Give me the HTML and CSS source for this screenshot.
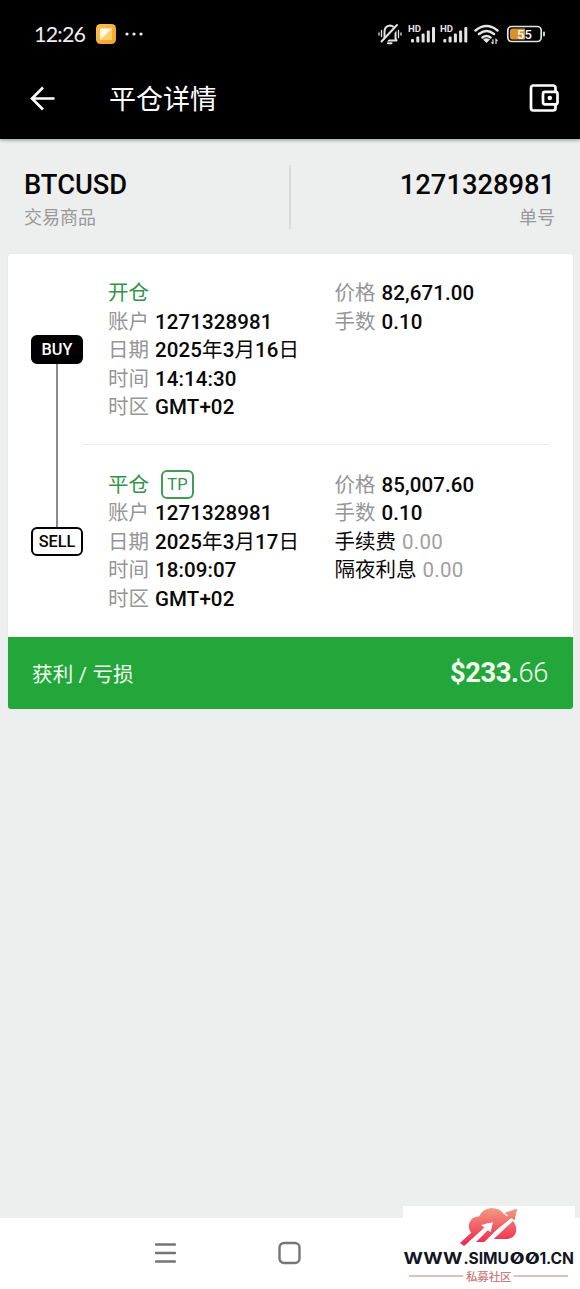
FILE: index.html
```html
<!DOCTYPE html>
<html lang="zh-CN">
<head>
<meta charset="utf-8">
<title>平仓详情</title>
<link rel="stylesheet" href="styles.css">
</head>
<body>
<div class="screen">
  <header class="top">
    <div class="status">
      <span class="clock">12:26</span>
      <svg class="note" width="20" height="20" viewBox="0 0 20 20">
        <defs><linearGradient id="amber" x1="0" y1="0" x2="1" y2="1"><stop offset="0" stop-color="#ffc04e"/><stop offset="1" stop-color="#f0a22a"/></linearGradient></defs>
        <rect width="20" height="20" rx="4.500" fill="url(#amber)"/>
        <rect x="4" y="4.500" width="12" height="11.500" rx="1" fill="#ffcf6c"/>
        <path d="M4 4.500H16L4 16Z" fill="#fff8e5"/>
      </svg>
      <svg class="dots" width="18" height="4" viewBox="0 0 18 4" fill="#eee"><circle cx="2" cy="2" r="1.600"/><circle cx="9" cy="2" r="1.600"/><circle cx="16" cy="2" r="1.600"/></svg>
      <svg class="indicators" width="170" height="26" viewBox="376 21 170 26" fill="none" stroke="#e4e4e4" stroke-width="2" stroke-linecap="round">
        <path d="M383.500 40.500H396.500L395.500 38.500V32Q395.500 26 390 25.500Q384.500 26 384.500 32V38.500Z" stroke-linejoin="round"/>
        <path d="M388 43.300H391.500"/>
        <path d="M397.500 26L384 41.500" stroke="#000" stroke-width="4.500"/>
        <path d="M397 25L381.500 41.500" stroke-width="2"/>
        <path d="M379 33V35M381.500 30.500V36.500M398.500 30.500V37.500M401 33V35" stroke-width="1.300"/>
        <g fill="#e4e4e4" stroke="none">
          <g id="bars"><rect x="411" y="39" width="3" height="3.500" rx="1"/><rect x="416.300" y="36.500" width="3" height="6" rx="1"/><rect x="421.600" y="33.500" width="3" height="9" rx="1"/><rect x="426.800" y="30.500" width="3" height="12" rx="1"/><rect x="432" y="27" width="3" height="15.500" rx="1"/></g>
          <use href="#bars" x="32.300"/>
          <text class="hd" x="408" y="32" textLength="13" lengthAdjust="spacingAndGlyphs">HD</text>
          <text class="hd" x="440" y="32" textLength="13" lengthAdjust="spacingAndGlyphs">HD</text>
          <path d="M483 39.500Q486.500 37 490 39.500L486.500 43Z"/>
        </g>
        <path d="M475.500 30.500Q486.500 21.500 497.500 30.500M479 34Q486.500 28 494 34M482.500 37.500Q486.500 34.500 490.500 37.500" stroke-width="2.500"/>
        <path d="M493 39.500V43.500M491.800 42.500L493 43.700M496 43.500V39.500L497.200 40.700" stroke-width="1.200"/>
        <path d="M512 28.500H525V39.500H512Q510 39.500 510 37V31Q510 28.500 512 28.500Z" fill="#d99128" stroke="none"/>
        <rect x="507.800" y="26.500" width="33.400" height="15" rx="4" stroke-width="1.700"/>
        <path d="M544 32.500V35.500" stroke-width="1.800"/>
        <text class="charge" x="524.500" y="38.800" text-anchor="middle">55</text>
      </svg>
    </div>
    <div class="appbar">
      <svg width="26" height="26" viewBox="0 0 26 26" fill="none" stroke="#fff" stroke-width="2.600"><path d="M25.500 13.500H3M14 2.500L3 13.500L14 24.500"/></svg>
      <h1 class="title">平仓详情</h1>
      <svg class="wallet" width="32" height="30" viewBox="0 0 32 30" fill="none" stroke="#fff" stroke-width="2.700" stroke-linejoin="round"><path d="M27.500 8V5Q27.500 2.500 25 2.500H5.500Q3 2.500 3 5V25Q3 27.500 5.500 27.500H25Q27.500 27.500 27.500 25V22"/><rect x="15" y="8.800" width="14.500" height="12.500" rx="2"/><circle cx="21.800" cy="15" r="2.300" fill="#fff" stroke="none"/></svg>
    </div>
  </header>

  <section class="summary">
    <div class="cell"><div class="value">BTCUSD</div><div class="caption">交易商品</div></div>
    <div class="cell right"><div class="value">1271328981</div><div class="caption">单号</div></div>
  </section>

  <main class="card">
    <div class="trade">
      <div class="rail"><span class="side buy">BUY</span><span class="line"></span><span class="side sell">SELL</span></div>
      <div class="legs">
        <section class="leg">
          <div class="col">
            <div class="row green">开仓</div>
            <div class="row"><span>账户</span> <b>1271328981</b></div>
            <div class="row"><span>日期</span> <b>2025<i>年</i>3<i>月</i>16<i>日</i></b></div>
            <div class="row"><span>时间</span> <b>14:14:30</b></div>
            <div class="row"><span>时区</span> <b>GMT+02</b></div>
          </div>
          <div class="col">
            <div class="row"><span>价格</span> <b>82,671.00</b></div>
            <div class="row"><span>手数</span> <b>0.10</b></div>
          </div>
        </section>
        <section class="leg">
          <div class="col">
            <div class="row green">平仓<span class="tag">TP</span></div>
            <div class="row"><span>账户</span> <b>1271328981</b></div>
            <div class="row"><span>日期</span> <b>2025<i>年</i>3<i>月</i>17<i>日</i></b></div>
            <div class="row"><span>时间</span> <b>18:09:07</b></div>
            <div class="row"><span>时区</span> <b>GMT+02</b></div>
          </div>
          <div class="col">
            <div class="row"><span>价格</span> <b>85,007.60</b></div>
            <div class="row"><span>手数</span> <b>0.10</b></div>
            <div class="row"><span class="dark">手续费</span> <b class="muted">0.00</b></div>
            <div class="row"><span class="dark">隔夜利息</span> <b class="muted">0.00</b></div>
          </div>
        </section>
      </div>
    </div>
    <div class="profit"><span class="profit-label">获利 / 亏损</span><span class="amount">$233.<span class="cents">66</span></span></div>
  </main>

  <nav class="nav">
    <svg width="22" height="22" viewBox="0 0 22 22" stroke="#757575" stroke-width="2.400" stroke-linecap="round"><path d="M2 2.500H21M2 11H21M2 19.500H21"/></svg>
    <svg width="24" height="24" viewBox="0 0 24 24" fill="none" stroke="#757575" stroke-width="2.400"><rect x="2.500" y="2" width="20" height="20" rx="4.500"/></svg>
  </nav>

  <svg class="watermark" width="172" height="83" viewBox="403 1206 172 83">
    <defs><linearGradient id="rose" gradientUnits="userSpaceOnUse" x1="0" y1="1208" x2="0" y2="1242"><stop offset="0" stop-color="#f49a82"/><stop offset="1" stop-color="#f0304f"/></linearGradient></defs>
    <rect x="403" y="1206" width="172" height="83" fill="#fff"/>
    <g fill="url(#rose)">
      <path d="M472 1234Q467.500 1229 469.300 1223Q472 1216 479 1216.500Q482 1209 491 1208Q500 1208 504 1214L514 1222Q518 1229 515 1234.500Q512 1239 506 1239H490L485 1242H475Z"/>
    </g>
    <path d="M465 1246.500L486 1228.500L482 1224.500L492.700 1222.500L490.500 1232L488 1230L475.500 1242.500V1247Z" fill="#fff"/>
    <path d="M483.500 1243L511 1215L515 1219L488.500 1241V1243Z" fill="#fff"/>
    <path d="M460 1243L472.500 1231.500L484 1222L486 1228L464 1246Z" fill="url(#rose)"/>
    <path d="M481 1225L492.700 1222.500L490.500 1232L487.500 1229.500L474 1242H468.500L484.500 1227.500Z" fill="#fff"/>
    <path d="M488 1236.500L508 1215.500L504.500 1213L517.300 1208.500L514.500 1220.500L511.500 1218Z" fill="url(#rose)"/>
    <path d="M484.500 1242L509.500 1219.500L513.500 1220.500L490.500 1242Z" fill="#fff"/>
    <text class="site" y="1264.300"><tspan x="403.500" textLength="59" lengthAdjust="spacingAndGlyphs">WWW</tspan><tspan x="463.500">.</tspan><tspan x="468.500" textLength="40.500" lengthAdjust="spacingAndGlyphs">SIMU</tspan><tspan x="509.500" textLength="30.500" lengthAdjust="spacingAndGlyphs">00</tspan><tspan x="539.500">1</tspan><tspan x="546">.</tspan><tspan x="550.500" textLength="23.500" lengthAdjust="spacingAndGlyphs">CN</tspan></text>
    <path d="M409 1276H463M513.500 1276H568" stroke="#c97c80" stroke-width="1.200"/>
    <text class="community" x="466" y="1280.500" textLength="45.500">私募社区</text>
  </svg>
</div>
</body>
</html>
```
FILE: styles.css
```css
* { box-sizing: border-box; }
body { margin: 0; font-family: Roboto, "Noto Sans CJK SC", sans-serif; color: #080808; }
.screen { position: relative; display: flex; flex-direction: column; width: 580px; height: 1289px; background: #edefee; overflow: hidden; }
.top { height: 139px; background: #000; color: #fff; box-shadow: 0 1px 4px rgba(0, 0, 0, .4); }
.status { display: flex; align-items: center; height: 68px; padding: 0 34px; }
.clock { width: 62px; font: 400 21.500px/30px Lato, sans-serif; letter-spacing: -.8px; color: #eee; }
.dots { margin-left: 9px; }
.indicators { margin-left: 233px; flex: none; }
.hd { font: 700 9px Roboto, sans-serif; }
.charge { font: 500 13px Roboto, sans-serif; fill: #fff; stroke: none; }
.appbar { display: flex; align-items: center; height: 60px; padding: 0 20px 0 29px; }
.title { flex: 1; margin: 3px 0 0 54px; font-size: 27px; line-height: 40px; font-weight: 400; }
.wallet { flex: none; }
.summary { display: flex; height: 114.500px; padding: 26px 25px 0 24px; }
.cell { flex: 1; height: 64px; padding-top: 1px; border-right: 2px solid #d9dbda; }
.cell.right { border: 0; text-align: right; }
.value { font-size: 27.300px; line-height: 38px; font-weight: 500; }
.caption { font-size: 18px; line-height: 27px; color: #999; }
.card { margin: 0 7.500px; border-radius: 3px; overflow: hidden; background: #fff; box-shadow: 0 0 2px rgba(0, 0, 0, .06); }
.trade { display: flex; height: 383px; }
.rail { display: flex; flex-direction: column; align-items: center; width: 52px; height: 221px; margin: 81.500px 0 0 23.500px; }
.side { display: flex; align-items: center; justify-content: center; width: 52px; height: 29px; flex: none; border: 2px solid #000; border-radius: 6px; font-size: 16.300px; font-weight: 500; }
.buy { background: #000; color: #fff; }
.line { flex: 1; width: 1.500px; background: #8b8b8b; }
.legs { flex: 1; margin-right: 24px; }
.leg { display: flex; height: 190.500px; padding: 25.500px 0 0 25px; }
.leg + .leg { height: 192px; padding-top: 25.500px; border-top: 1.500px solid #ececec; }
.col { width: 226.500px; }
.col + .col { width: auto; }
.row { display: flex; align-items: center; gap: 6px; height: 28.550px; font-size: 20.500px; line-height: 28.550px; color: #969696; white-space: nowrap; }
.row b { font-weight: 500; color: #080808; letter-spacing: .1px; }
.row i { font-style: normal; font-weight: 400; }
.row .muted { color: #a0a0a0; font-weight: 400; letter-spacing: .3px; }
.row .dark { color: #080808; }
.row.green { color: #329448; }
.tag { display: flex; align-items: center; justify-content: center; width: 33px; height: 29px; margin-left: 6px; border: 2px solid #429c55; border-radius: 6px; font-size: 16.500px; }
.profit { display: flex; align-items: center; justify-content: space-between; height: 72.500px; padding: 0 24.500px; background: #23a73b; color: #f4fff1; }
.profit-label { font-size: 20.500px; letter-spacing: .15px; }
.amount { font-size: 27.300px; font-weight: 700; letter-spacing: -.4px; }
.cents { font-weight: 300; }
.nav { display: flex; align-items: center; gap: 101px; height: 71.500px; margin-top: auto; padding-left: 154px; background: #fff; }
.watermark { position: absolute; left: 403px; bottom: 0; }
.site { font: 700 15.500px Inter, sans-serif; font-feature-settings: "zero"; fill: #15151f; }
.community { font: 500 11.500px "Noto Sans CJK SC", sans-serif; fill: #c97c80; }
```
